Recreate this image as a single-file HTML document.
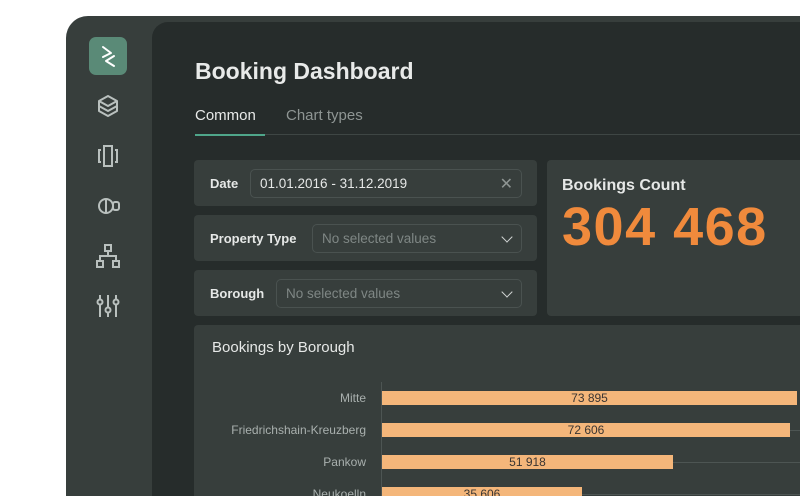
<!DOCTYPE html>
<html style="overflow:hidden;width:800px;height:496px"><head><style>
*{margin:0;padding:0;box-sizing:border-box}
body{width:800px;height:496px;background:#fff;overflow:hidden;position:relative;font-family:"Liberation Sans",sans-serif}
.app{position:absolute;left:66px;top:16px;width:734px;height:480px;background:#373e3c;border-radius:22px 0 0 0}
.main{position:absolute;left:152px;top:22px;width:648px;height:474px;background:#262c2b;border-radius:16px 0 0 0}
.logo{position:absolute;left:89px;top:37px;width:38px;height:38px;background:#5a8a77;border-radius:7px}
.ic{position:absolute;left:93px;width:30px;height:30px}
.panel{position:absolute;background:#373e3c;border-radius:4px}
.lbl{position:absolute;color:#e6e8e7;font-weight:bold;font-size:13px}
.inp{position:absolute;border:1px solid #4a5250;border-radius:5px;height:29px;font-size:13.5px;padding:6px 9px;color:#7f8785}
.chev{position:absolute;right:10px;top:8px;width:8px;height:8px;border-right:1.6px solid #d0d4d3;border-bottom:1.6px solid #d0d4d3;transform:rotate(45deg)}
.bl{position:absolute;right:434px;color:#a9b0ae;font-size:12px;text-align:right;white-space:nowrap}
.bar{position:absolute;left:382px;height:14px;background:#f4b67a;color:#3a3532;font-size:12px;text-align:center;line-height:14px}
.grid{position:absolute;height:1px;background:#4d5553}
</style></head><body>
<div class="app"></div>
<div class="main"></div>
<div class="logo"><svg width="38" height="38" viewBox="0 0 38 38"><path d="M14 10 L22 16 L14 20 M25 19 L17 24 L25 29" stroke="#fff" stroke-width="2" fill="none" stroke-linecap="round" stroke-linejoin="round"/></svg></div>
<svg class="ic" style="top:91px" viewBox="0 0 30 30" fill="none" stroke="#b9c0be" stroke-width="2" stroke-linejoin="round"><path d="M15 5 L24 10 L15 15 L6 10 Z"/><path d="M6 10 V20 L15 25 L24 20 V10"/><path d="M6 15 L15 20 L24 15"/></svg>
<svg class="ic" style="top:141px" viewBox="0 0 30 30" fill="none" stroke="#b9c0be" stroke-width="2"><rect x="11" y="5" width="8" height="20"/><path d="M8 9 H6 V21 H8 M22 9 H24 V21 H22"/></svg>
<svg class="ic" style="top:191px" viewBox="0 0 30 30" fill="none" stroke="#b9c0be" stroke-width="2"><circle cx="13" cy="15" r="7"/><path d="M13 8 V22"/><rect x="20" y="11" width="6" height="8" rx="2"/></svg>
<svg class="ic" style="top:241px" viewBox="0 0 30 30" fill="none" stroke="#b9c0be" stroke-width="2"><rect x="12" y="4" width="6" height="6"/><rect x="4" y="20" width="6" height="6"/><rect x="20" y="20" width="6" height="6"/><path d="M15 10 V15 M7 20 V15 H23 V20"/></svg>
<svg class="ic" style="top:291px" viewBox="0 0 30 30" fill="none" stroke="#b9c0be" stroke-width="2"><path d="M7 4 V26 M15 4 V26 M23 4 V26"/><circle cx="7" cy="11" r="2.5" fill="#373e3c"/><circle cx="15" cy="19" r="2.5" fill="#373e3c"/><circle cx="23" cy="11" r="2.5" fill="#373e3c"/></svg>

<div style="position:absolute;left:195px;top:58px;color:#e8eae9;font-size:23px;font-weight:bold">Booking Dashboard</div>
<div style="position:absolute;left:195px;top:107px;color:#e8eae9;font-size:15px">Common</div>
<div style="position:absolute;left:286px;top:107px;color:#8e9593;font-size:15px">Chart types</div>
<div style="position:absolute;left:195px;top:134px;width:605px;height:1px;background:#3e4644"></div>
<div style="position:absolute;left:195px;top:134px;width:70px;height:2px;background:#4fa68a"></div>

<div class="panel" style="left:194px;top:160px;width:343px;height:46px"></div>
<div class="lbl" style="left:210px;top:176px">Date</div>
<div class="inp" style="left:250px;top:169px;width:272px;color:#e6e8e7">01.01.2016 - 31.12.2019<span style="position:absolute;right:8px;top:4px;color:#8e9593;font-size:16px">✕</span></div>
<div class="panel" style="left:194px;top:215px;width:343px;height:46px"></div>
<div class="lbl" style="left:210px;top:231px">Property Type</div>
<div class="inp" style="left:312px;top:224px;width:210px">No selected values<div class="chev"></div></div>
<div class="panel" style="left:194px;top:270px;width:343px;height:46px"></div>
<div class="lbl" style="left:210px;top:286px">Borough</div>
<div class="inp" style="left:276px;top:279px;width:246px">No selected values<div class="chev"></div></div>

<div class="panel" style="left:547px;top:160px;width:260px;height:156px"></div>
<div style="position:absolute;left:562px;top:177px;color:#e6e8e7;font-weight:bold;font-size:16px">Bookings Count</div>
<div style="position:absolute;left:562px;top:196px;color:#f08a3c;font-weight:bold;font-size:54px;letter-spacing:1.5px">304 468</div>

<div class="panel" style="left:194px;top:325px;width:610px;height:180px"></div>
<div style="position:absolute;left:212px;top:339px;color:#e6e8e7;font-size:15px">Bookings by Borough</div>
<div style="position:absolute;left:381px;top:382px;width:1px;height:120px;background:#4d5553"></div>
<div class="grid" style="left:790px;top:430px;width:10px"></div>
<div class="grid" style="left:673px;top:462px;width:127px"></div>
<div class="grid" style="left:582px;top:494px;width:218px"></div>
<div class="bl" style="top:391px">Mitte</div>
<div class="bar" style="top:391px;width:415px">73 895</div>
<div class="bl" style="top:423px">Friedrichshain-Kreuzberg</div>
<div class="bar" style="top:423px;width:408px">72 606</div>
<div class="bl" style="top:455px">Pankow</div>
<div class="bar" style="top:455px;width:291px">51 918</div>
<div class="bl" style="top:487px">Neukoelln</div>
<div class="bar" style="top:487px;width:200px">35 606</div>
</body></html>
